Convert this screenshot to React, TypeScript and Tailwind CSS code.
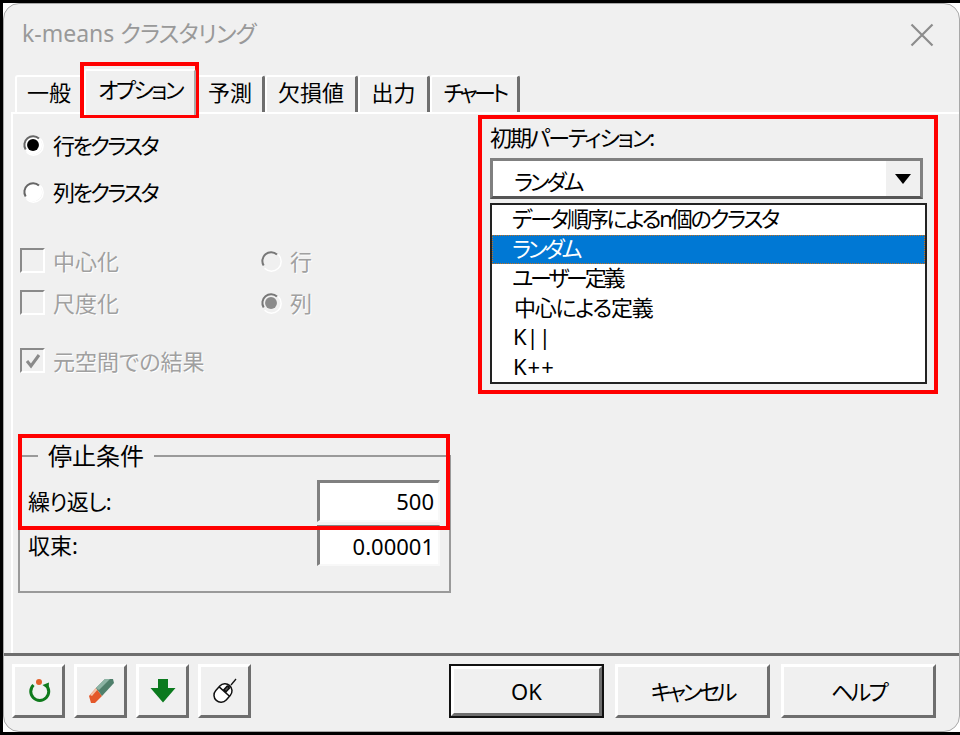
const font = { fontFamily: '"Noto Sans", "Noto Sans CJK JP", sans-serif' };

const tabs = [
  { label: "一般", w: "w-[69px]", track: "" },
  { label: "オプション", w: "w-[112px]", track: "tracking-[-2.6px]", active: true },
  { label: "予測", w: "w-[69px]", track: "" },
  { label: "欠損値", w: "w-[93px]", track: "" },
  { label: "出力", w: "w-[72px]", track: "" },
  { label: "チャート", w: "w-[90px]", track: "tracking-[-3.6px]" },
];

const items = [
  { label: "データ順序によるn個のクラスタ", track: "tracking-[-2.2px]" },
  { label: "ランダム", track: "tracking-[-3px]", selected: true },
  { label: "ユーザー定義", track: "tracking-[-3.2px]" },
  { label: "中心による定義", track: "tracking-[-1.3px]", indent: "pl-[22px]" },
  { label: "K||", track: "", indent: "pl-[21px]" },
  { label: "K++", track: "tracking-[1px]", indent: "pl-[21px]" },
];

const Radio = ({ checked, disabled }: { checked?: boolean; disabled?: boolean }) => (
  <svg width="22" height="22" viewBox="0 0 24 24" className="shrink-0">
    <circle cx="12" cy="12" r="10" fill={disabled ? "#f0f0f0" : "#fff"} />
    <path d="M4 17A9.5 9.5 0 0 1 18.5 5" fill="none" stroke={disabled ? "#777" : "#666"} strokeWidth="2.2" />
    <path d="M5 20A10.5 10.5 0 0 0 20 5" fill="none" stroke="#fff" strokeWidth="1.6" />
    {checked && <circle cx="12" cy="12" r="6.5" fill={disabled ? "#8a8a8a" : "#000"} />}
  </svg>
);

const Check = ({ checked }: { checked?: boolean }) => (
  <div className="flex h-[25px] w-[25px] shrink-0 items-center justify-center border-2 border-t-[#8a8a8a] border-l-[#8a8a8a] border-r-white border-b-white">
    {checked && (
      <svg width="18" height="18" viewBox="0 0 18 18">
        <path d="M3 9l4 5 8-11" fill="none" stroke="#8a8a8a" strokeWidth="3" />
      </svg>
    )}
  </div>
);

const NumberField = ({ value, h }: { value: string; h: string }) => (
  <div className={`${h} flex w-[123px] items-center justify-end border-[3px] border-t-[#808080] border-l-[#808080] border-r-2 border-b-2 border-r-[#f8f8f8] border-b-[#f8f8f8] bg-white pr-1 text-[22px] text-black`}>
    {value}
  </div>
);

const Disabled = ({ children }: { children: string }) => (
  <span className="text-[22px] leading-none text-[#a0a0a0] [text-shadow:1px_1px_0_#fff]">{children}</span>
);

const ResetIcon = () => (
  <svg width="26" height="26" viewBox="0 0 26 26">
    <path d="M7.5 7A9 9 0 1 0 20 7" fill="none" stroke="#0f7a1c" strokeWidth="3" />
    <path d="M16.5 7l6.5-2.5-.5 7z" fill="#0f7a1c" />
    <circle cx="13" cy="4" r="3" fill="#e2602a" />
  </svg>
);

const EraserIcon = () => (
  <svg width="26" height="26" viewBox="0 0 26 26">
    <path d="M1 18L8 10l6 8-7 7H3z" fill="#e4582a" />
    <path d="M2 17l6-7 2 1-6 7z" fill="#f4c2a8" />
    <path d="M8 10l9-9h8l1 4-12 13z" fill="#4f7f6b" />
    <path d="M8 10l9-9h5L11 12z" fill="#8cb3a4" />
  </svg>
);

const ArrowIcon = () => (
  <svg width="26" height="26" viewBox="0 0 26 26">
    <path d="M8 1h10v9h7.5L13 24.5.5 10H8z" fill="#0b7a1e" />
  </svg>
);

const MouseIcon = () => (
  <svg width="26" height="26" viewBox="0 0 26 26">
    <g transform="rotate(42 11 15)" fill="none" stroke="#111" strokeWidth="1.5">
      <rect x="4" y="5" width="14" height="20" rx="7" fill="#fff" />
      <path d="M4 13h14M11 5v8" />
      <rect x="9.5" y="7" width="3" height="5" fill="#555" />
    </g>
    <path d="M19 7l5-6" stroke="#111" strokeWidth="1.3" />
  </svg>
);

const IconButton = ({ children }: { children: React.ReactNode }) => (
  <div className="flex h-[54px] w-[53px] items-center justify-center border-[3px] border-t-white border-l-white border-r-[#6e6e6e] border-b-[#6e6e6e] bg-[#f0f0f0]">
    {children}
  </div>
);

const TextButton = ({ label, track, isDefault }: { label: string; track?: string; isDefault?: boolean }) => (
  <div className={`h-[54px] w-[155px] ${isDefault ? "border-2 border-[#111]" : ""}`}>
    <div className={`flex h-full items-center justify-center border-[3px] border-t-white border-l-white border-r-[#6e6e6e] border-b-[#6e6e6e] bg-[#f0f0f0] text-[22px] text-black ${track ?? ""}`}>
      {label}
    </div>
  </div>
);

const RedBox = ({ className }: { className: string }) => (
  <div className={`pointer-events-none absolute border-[#ff0000] ${className}`} />
);

export default function App() {
  return (
    <div style={font} className="relative h-[735px] w-[960px] overflow-hidden border-y-[3px] border-l-[3px] border-y-black border-l-black bg-white [font-feature-settings:'palt']">
      <div className="flex h-full flex-col rounded-[16px] border border-[#a8a8a8] bg-[#f0f0f0]">
        <div className="flex h-[67px] shrink-0 items-start justify-between pt-[9px] pr-[25px] pl-[18px]">
          <span className="text-[23px] leading-[40px] text-[#999]">
            k-means <span className="tracking-[-0.8px]">クラスタリング</span>
          </span>
          <svg width="24" height="24" viewBox="0 0 24 24" className="mt-[10px]">
            <path d="M1.5 1.5l21 21M22.5 1.5l-21 21" stroke="#8c8c8c" strokeWidth="2.2" />
          </svg>
        </div>

        <div className="flex h-[41px] shrink-0 items-end pl-[11px]">
          {tabs.map((t) => (
            <div
              key={t.label}
              className={`${t.w} ${t.track} flex items-center justify-center rounded-t-[3px] border-t-2 border-l-2 border-t-white border-l-white text-[22px] text-black ${
                t.active ? "relative -top-px z-10 -mb-[4px] h-[46px] border-r-2 border-r-[#aaa] bg-[#f0f0f0] pb-[8px]" : "h-[37px] border-r-[3px] border-r-[#6e6e6e] pb-[5px]"
              }`}
            >
              {t.label}
            </div>
          ))}
        </div>

        <div className="ml-[7px] flex min-h-0 flex-1 border-t-2 border-l-2 border-t-white border-l-white">
          <div className="flex w-[441px] shrink-0 flex-col pt-[19px] pl-[7px] text-[22px] text-black">
            <label className="flex h-[24px] items-center gap-[9px] pl-[2px]">
              <Radio checked />
              <span className="tracking-[-2.6px]">行をクラスタ</span>
            </label>
            <label className="mt-[23px] flex h-[24px] items-center gap-[9px] pl-[2px]">
              <Radio />
              <span className="tracking-[-2.6px]">列をクラスタ</span>
            </label>

            <div className="mt-[44px] grid grid-cols-[240px_1fr] gap-y-[17px]">
              <div className="flex h-[25px] items-center gap-[8px]">
                <Check />
                <Disabled>中心化</Disabled>
              </div>
              <div className="flex h-[25px] items-center gap-[8px]">
                <Radio disabled />
                <Disabled>行</Disabled>
              </div>
              <div className="flex h-[25px] items-center gap-[8px]">
                <Check />
                <Disabled>尺度化</Disabled>
              </div>
              <div className="flex h-[25px] items-center gap-[8px]">
                <Radio checked disabled />
                <Disabled>列</Disabled>
              </div>
            </div>

            <div className="mt-[33px] flex h-[25px] items-center gap-[8px]">
              <Check checked />
              <Disabled>元空間での結果</Disabled>
            </div>

            <fieldset className="mt-[67px] ml-[-2px] h-[153px] w-[433px] border-2 border-[#9a9a9a] pt-[8px] pr-[9px] pl-[8px]">
              <legend className="ml-[10px] px-[10px] text-[24px] leading-[32px] text-black">停止条件</legend>
              <div className="flex items-center justify-between">
                <span className="tracking-[-0.8px]">繰り返し:</span>
                <NumberField value="500" h="h-[42px]" />
              </div>
              <div className="mt-[3px] flex items-center justify-between">
                <span>収束:</span>
                <NumberField value="0.00001" h="h-[41px]" />
              </div>
            </fieldset>
          </div>

          <div className="relative flex-1 pt-[8px] pl-[36px] text-[22px] text-black">
            <div className="leading-[30px] tracking-[-2.1px]">初期パーティション:</div>
            <div className="mt-[6px] flex h-[41px] w-[433px] items-center justify-between border-[3px] border-[#808080] border-b-[#555] bg-white pl-[21px]">
              <span className="pt-[5px] tracking-[-3px]">ランダム</span>
              <div className="flex h-full w-[36px] items-center justify-center border-l-2 border-l-white bg-[#f0f0f0]">
                <svg width="16" height="10" viewBox="0 0 16 10">
                  <path d="M0 0h16L8 10z" fill="#000" />
                </svg>
              </div>
            </div>
            <div className="absolute top-[89px] left-[36px] z-10 w-[437px] border-2 border-[#222] bg-white leading-[26px]">
              {items.map((item) => (
                <div
                  key={item.label}
                  className={`h-[29.5px] ${item.indent ?? "pl-[20px]"} ${item.track} ${item.selected ? "bg-[#0078d4] text-white outline-1 -outline-offset-1 outline-[#c8701c] outline-dotted" : ""}`}
                >
                  {item.label}
                </div>
              ))}
            </div>
          </div>
        </div>

        <div className="flex h-[78px] shrink-0 items-start justify-between border-t-[3px] border-t-[#6e6e6e] pt-[8px] pr-[23px] pl-[8px]">
          <div className="flex gap-[9px]">
            <IconButton><ResetIcon /></IconButton>
            <IconButton><EraserIcon /></IconButton>
            <IconButton><ArrowIcon /></IconButton>
            <IconButton><MouseIcon /></IconButton>
          </div>
          <div className="flex gap-[11px]">
            <TextButton label="OK" isDefault />
            <TextButton label="キャンセル" track="tracking-[-3.2px]" />
            <TextButton label="ヘルプ" track="tracking-[-2.7px]" />
          </div>
        </div>
      </div>

      <RedBox className="top-[59px] left-[77px] h-[56px] w-[119px] border-[4px]" />
      <RedBox className="top-[112px] left-[475px] h-[279px] w-[460px] border-[4px]" />
      <RedBox className="top-[431px] left-[15px] h-[96px] w-[432px] border-[4px]" />
    </div>
  );
}
